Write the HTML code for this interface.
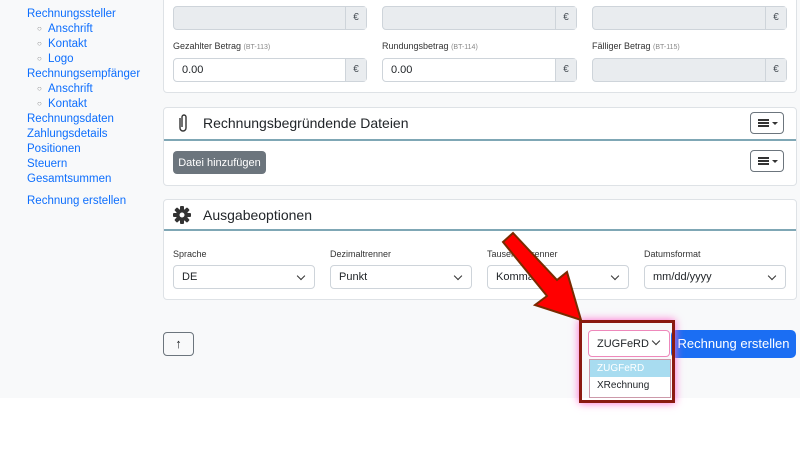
<!DOCTYPE html><html><head><style>
body{margin:0;width:800px;height:449px;font-family:"Liberation Sans",sans-serif;background:#fff;position:relative;overflow:hidden;font-size:11px;color:#212529}
.a{position:absolute;white-space:nowrap}
.side{left:0;top:0;width:156px;height:398px;background:#f8f9fa}
.main{left:156px;top:0;width:644px;height:398px;background:#f8f9fa}
.card{position:absolute;background:#fff;border:1px solid #dee2e6;border-radius:4px;left:163px;width:632px}
.inp{position:absolute;height:24px;border:1px solid #ced4da;border-radius:4px;background:#fff;box-sizing:border-box;font-size:11px;line-height:22px;padding-left:8px;white-space:nowrap}
.inp.d{background:#e9ecef}
.eur{position:absolute;right:0;top:0;width:20px;height:22px;background:#e9ecef;border-left:1px solid #ced4da;text-align:center;font-size:10px;color:#495057}
.lbl{position:absolute;font-size:9px;color:#333;white-space:nowrap}
.lbl small{color:#888;font-size:7px}
.sel:after{content:"";position:absolute;right:10px;top:7px;width:5px;height:5px;border-right:1.3px solid #333;border-bottom:1.3px solid #333;transform:rotate(45deg)}
.hb{position:absolute;width:34px;height:22px;border:1px solid #6c757d;border-radius:4px;box-sizing:border-box;background:#fff}
.hb i{position:absolute;left:7px;top:6px;width:11px;height:1.5px;background:#333;box-shadow:0 3px #333,0 6px #333}
.hb b{position:absolute;right:5px;top:9px;border:3px solid transparent;border-top-color:#333}
.sb{position:absolute;left:0;top:0;color:#0d6efd;font-size:11.5px}
</style></head><body>
<div class="a side"></div><div class="a main"></div>
<div class="sb">
<div class="a" style="left:27px;top:8px">Rechnungssteller</div>
<div class="a" style="left:37px;top:24px;color:#888;font-size:8px">○</div><div class="a" style="left:48px;top:23px">Anschrift</div>
<div class="a" style="left:37px;top:39px;color:#888;font-size:8px">○</div><div class="a" style="left:48px;top:38px">Kontakt</div>
<div class="a" style="left:37px;top:54px;color:#888;font-size:8px">○</div><div class="a" style="left:48px;top:53px">Logo</div>
<div class="a" style="left:27px;top:68px">Rechnungsempfänger</div>
<div class="a" style="left:37px;top:84px;color:#888;font-size:8px">○</div><div class="a" style="left:48px;top:83px">Anschrift</div>
<div class="a" style="left:37px;top:99px;color:#888;font-size:8px">○</div><div class="a" style="left:48px;top:98px">Kontakt</div>
<div class="a" style="left:27px;top:113px">Rechnungsdaten</div>
<div class="a" style="left:27px;top:128px">Zahlungsdetails</div>
<div class="a" style="left:27px;top:143px">Positionen</div>
<div class="a" style="left:27px;top:158px">Steuern</div>
<div class="a" style="left:27px;top:173px">Gesamtsummen</div>
<div class="a" style="left:27px;top:195px">Rechnung erstellen</div>
</div>
<div class="card" style="top:-5px;height:96px"></div>
<div class="inp d" style="left:173px;top:6px;width:194px"><div class="eur">€</div></div>
<div class="inp d" style="left:382px;top:6px;width:195px"><div class="eur">€</div></div>
<div class="inp d" style="left:592px;top:6px;width:195px"><div class="eur">€</div></div>
<div class="lbl" style="left:173px;top:41px">Gezahlter Betrag <small>(BT-113)</small></div>
<div class="lbl" style="left:382px;top:41px">Rundungsbetrag <small>(BT-114)</small></div>
<div class="lbl" style="left:592px;top:41px">Fälliger Betrag <small>(BT-115)</small></div>
<div class="inp" style="left:173px;top:58px;width:194px">0.00<div class="eur">€</div></div>
<div class="inp" style="left:382px;top:58px;width:195px">0.00<div class="eur">€</div></div>
<div class="inp d" style="left:592px;top:58px;width:195px"><div class="eur">€</div></div>

<div class="card" style="top:107px;height:77px"></div>
<div class="a" style="left:164px;top:139px;width:632px;height:1.5px;background:#7fa7b5"></div>
<svg class="a" style="left:177px;top:113px" width="12" height="20" viewBox="0 0 12 20"><path d="M3 5v10a3 3 0 0 0 6 0V4a2 2 0 0 0-4 0v10" fill="none" stroke="#333" stroke-width="1.4"/></svg>
<div class="a" style="left:203px;top:115px;font-size:14px">Rechnungsbegründende Dateien</div>
<div class="hb" style="left:750px;top:112px"><i></i><b></b></div>
<div class="a" style="left:173px;top:151px;width:93px;height:23px;background:#6c757d;border-radius:4px;color:#fff;font-size:11px;display:flex;align-items:center;justify-content:center">Datei hinzufügen</div>
<div class="hb" style="left:750px;top:150px"><i></i><b></b></div>

<div class="card" style="top:199px;height:99px"></div>
<div class="a" style="left:164px;top:229px;width:632px;height:1.5px;background:#7fa7b5"></div>
<svg class="a" style="left:173px;top:206px" width="18" height="18" viewBox="0 0 18 18"><g fill="#333"><circle cx="9" cy="9" r="6"/><rect x="7" y="0" width="4" height="18" rx="1"/><rect x="0" y="7" width="18" height="4" rx="1"/><rect x="7" y="0" width="4" height="18" rx="1" transform="rotate(45 9 9)"/><rect x="7" y="0" width="4" height="18" rx="1" transform="rotate(-45 9 9)"/></g><circle cx="9" cy="9" r="2.5" fill="#fff"/></svg>
<div class="a" style="left:203px;top:207px;font-size:14px">Ausgabeoptionen</div>
<div class="lbl" style="left:173px;top:249px">Sprache</div>
<div class="lbl" style="left:330px;top:249px">Dezimaltrenner</div>
<div class="lbl" style="left:487px;top:249px">Tausendertrenner</div>
<div class="lbl" style="left:644px;top:249px">Datumsformat</div>
<div class="inp sel" style="left:173px;top:265px;width:142px">DE</div>
<div class="inp sel" style="left:330px;top:265px;width:142px">Punkt</div>
<div class="inp sel" style="left:487px;top:265px;width:142px">Komma</div>
<div class="inp sel" style="left:644px;top:265px;width:142px">mm/dd/yyyy</div>

<div class="a" style="left:163px;top:332px;width:31px;height:24px;border:1px solid #6c757d;border-radius:4px;box-sizing:border-box;text-align:center;font-size:13px;line-height:21px">↑</div>
<div class="a" style="left:671px;top:330px;width:125px;height:28px;background:#1b6ef3;border-radius:5px;color:#fff;font-size:13px;line-height:28px;text-align:center">Rechnung erstellen</div>
<div class="a" style="left:579px;top:320px;width:96px;height:83px;box-sizing:border-box;border:3px solid #8b1a10;box-shadow:0 0 8px #f6c"></div>
<div class="inp sel" style="left:588px;top:330px;width:82px;height:27px;line-height:26px;border-color:#e8b">ZUGFeRD</div>
<div class="a" style="left:589px;top:359px;width:80px;height:37px;border:1px solid #c9a;background:#fff;font-size:10px">
<div style="background:#a8dcf0;color:#fff;height:17px;line-height:17px;padding-left:7px">ZUGFeRD</div>
<div style="height:18px;line-height:18px;padding-left:7px">XRechnung</div></div>
<svg class="a" style="left:495px;top:230px" width="92" height="95"><path d="M8 12 L18 3 L62 50 L72 42 L86 90 L40 75 L52 66 Z" fill="#f00" stroke="#7a2a00" stroke-width="2"/></svg>
</body></html>
